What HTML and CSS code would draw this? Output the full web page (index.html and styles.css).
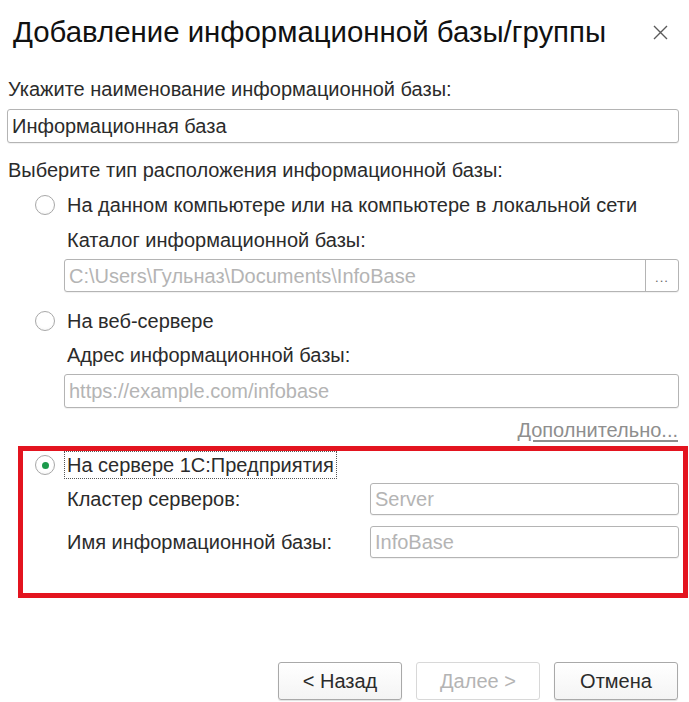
FILE: index.html
```html
<!DOCTYPE html>
<html lang="ru">
<head>
<meta charset="utf-8">
<title>Добавление информационной базы/группы</title>
<link rel="stylesheet" href="styles.css">
</head>
<body>
<div class="dialog">
  <header class="head">
    <h1 class="title">Добавление информационной базы/группы</h1>
    <span class="close">
      <svg width="17" height="17" viewBox="0 0 17 17"><path d="M2 2 L15 15 M15 2 L2 15" stroke="#5a5a5a" stroke-width="1.4" fill="none"/></svg>
    </span>
  </header>

  <div class="label l1">Укажите наименование информационной базы:</div>
  <div class="input in1"><span class="val">Информационная база</span></div>

  <div class="label l2">Выберите тип расположения информационной базы:</div>

  <div class="options">
    <div class="radio-row r1"><span class="radio"></span><span class="rtext">На данном компьютере или на компьютере в локальной сети</span></div>
    <div class="sub-label s1">Каталог информационной базы:</div>
    <div class="input sub-input in2"><span class="ph">C:\Users\Гульназ\Documents\InfoBase</span><span class="dots">...</span></div>

    <div class="radio-row r2"><span class="radio"></span><span class="rtext">На веб-сервере</span></div>
    <div class="sub-label s2">Адрес информационной базы:</div>
    <div class="input sub-input in3"><span class="ph">https://example.com/infobase</span></div>
  </div>

  <div class="more"><span class="link">Дополнительно...</span></div>

  <div class="highlight">
    <div class="radio-row r3"><span class="radio checked"></span><span class="rtext focus">На сервере 1С:Предприятия</span></div>
    <div class="pair p1"><span class="pair-label">Кластер серверов:</span><div class="input pin"><span class="ph">Server</span></div></div>
    <div class="pair p2"><span class="pair-label">Имя информационной базы:</span><div class="input pin"><span class="ph">InfoBase</span></div></div>
  </div>

  <div class="buttons">
    <span class="btn">&lt; Назад</span>
    <span class="btn disabled">Далее &gt;</span>
    <span class="btn">Отмена</span>
  </div>
</div>
</body>
</html>
```
FILE: styles.css
```css
* { box-sizing: border-box; }
html, body { margin: 0; background: #fff; }
body { width: 689px; height: 702px; overflow: hidden; }

.dialog {
  padding: 14px 10px 0 7px;
  font-family: "Liberation Sans", Arial, sans-serif;
  font-size: 20px;
  line-height: 24px;
  color: #2b2b2b;
}

.head { display: flex; align-items: center; height: 36px; padding-left: 6px; }
.title { flex: 1; margin: 0; font-size: 29.4px; line-height: 36px; font-weight: normal; color: #111; white-space: nowrap; }
.close { width: 17px; height: 17px; margin-right: 10px; display: flex; }

.label { padding-left: 1px; white-space: nowrap; }
.l1 { margin-top: 27px; }
.l2 { margin-top: 15px; }

.input {
  display: flex;
  align-items: center;
  height: 34px;
  border: 1px solid #b4b4b4;
  border-radius: 3px;
  padding: 0 4px;
  background: #fff;
  box-shadow: 0 1px 1px rgba(0,0,0,0.06);
  white-space: nowrap;
}
.in1 { margin-top: 8px; }
.val { color: #2b2b2b; }
.ph { color: #b4b4b4; flex: 1; }

.options { padding-left: 28px; }
.radio-row { display: flex; align-items: center; gap: 12px; white-space: nowrap; }
.radio {
  width: 20px; height: 20px; flex: none;
  border: 1.5px solid #a8a8a8;
  border-radius: 50%;
  background: radial-gradient(circle at 50% 40%, #fff 55%, #f0f0f0 100%);
  display: flex; align-items: center; justify-content: center;
}
.radio.checked::after { content: ""; width: 7px; height: 7px; border-radius: 50%; background: #1c9a4c; }

.r1 { margin-top: 11px; }
.r2 { margin-top: 17px; }
.sub-label { padding-left: 32px; white-space: nowrap; }
.s1 { margin-top: 11px; }
.s2 { margin-top: 10px; }
.sub-input { margin-left: 29px; }
.in2 { margin-top: 7px; height: 33px; padding-right: 0; }
.in3 { margin-top: 7px; }
.dots {
  width: 33px; height: 100%; flex: none;
  border-left: 1px solid #b4b4b4;
  display: flex; align-items: center; justify-content: center;
  font-size: 13px; color: #666; letter-spacing: 1px; padding-top: 4px;
}

.more { margin-top: 10px; text-align: right; padding-right: 1px; }
.link { color: #8e8e8e; text-decoration: underline; text-underline-offset: 3px; }

.highlight {
  margin: 4px -9px 0 11px;
  border: 5px solid #e3141f;
  padding: 2px 4px 35px 12px;
}
.focus { outline: 1px dotted #555; outline-offset: 1px; padding: 0 1px; margin-left: -1px; }

.pair { display: grid; grid-template-columns: 335px 1fr; align-items: center; }
.pair-label { padding-left: 32px; white-space: nowrap; }
.pin { height: 32px; }
.p1 { margin-top: 6px; }
.p2 { margin-top: 11px; }

.buttons { display: flex; justify-content: flex-end; gap: 14px; margin-top: 64px; padding-right: 1px; }
.btn {
  width: 124px; height: 38px;
  display: flex; align-items: center; justify-content: center;
  border: 1px solid #a9a9a9;
  border-radius: 3px;
  background: linear-gradient(#ffffff, #f4f4f4);
  box-shadow: 0 1px 1px rgba(0,0,0,0.12);
  color: #2b2b2b;
}
.btn.disabled { border-color: #d8d8d8; color: #b4b4b4; box-shadow: none; background: #fff; }
```
